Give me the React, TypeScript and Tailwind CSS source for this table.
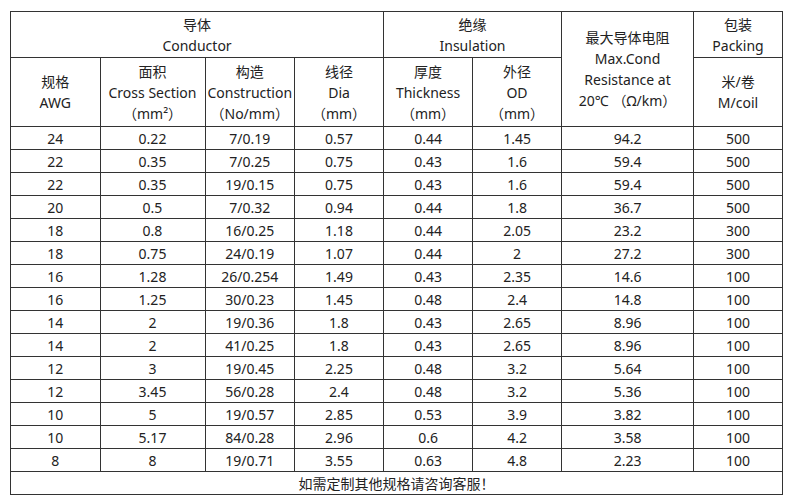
import React from 'react';

const rows: string[][] = [
  ['24', '0.22', '7/0.19', '0.57', '0.44', '1.45', '94.2', '500'],
  ['22', '0.35', '7/0.25', '0.75', '0.43', '1.6', '59.4', '500'],
  ['22', '0.35', '19/0.15', '0.75', '0.43', '1.6', '59.4', '500'],
  ['20', '0.5', '7/0.32', '0.94', '0.44', '1.8', '36.7', '500'],
  ['18', '0.8', '16/0.25', '1.18', '0.44', '2.05', '23.2', '300'],
  ['18', '0.75', '24/0.19', '1.07', '0.44', '2', '27.2', '300'],
  ['16', '1.28', '26/0.254', '1.49', '0.43', '2.35', '14.6', '100'],
  ['16', '1.25', '30/0.23', '1.45', '0.48', '2.4', '14.8', '100'],
  ['14', '2', '19/0.36', '1.8', '0.43', '2.65', '8.96', '100'],
  ['14', '2', '41/0.25', '1.8', '0.43', '2.65', '8.96', '100'],
  ['12', '3', '19/0.45', '2.25', '0.48', '3.2', '5.64', '100'],
  ['12', '3.45', '56/0.28', '2.4', '0.48', '3.2', '5.36', '100'],
  ['10', '5', '19/0.57', '2.85', '0.53', '3.9', '3.82', '100'],
  ['10', '5.17', '84/0.28', '2.96', '0.6', '4.2', '3.58', '100'],
  ['8', '8', '19/0.71', '3.55', '0.63', '4.8', '2.23', '100'],
];

const cell = "border border-[#333] text-center align-middle p-0";

export default function App() {
  return (
    <div className="w-[790px] h-[504px] bg-white pt-[11px] pl-[10px] font-['Noto_Sans','Noto_Sans_CJK_SC',sans-serif] text-[14px] leading-[21px] text-[#222]">
      <table className="table-fixed border-collapse w-[773px]">
        <colgroup>
          <col className="w-[89.5px]" />
          <col className="w-[105px]" />
          <col className="w-[89.5px]" />
          <col className="w-[89px]" />
          <col className="w-[89px]" />
          <col className="w-[89px]" />
          <col className="w-[132px]" />
          <col className="w-[89px]" />
        </colgroup>
        <thead>
          <tr className="h-[46px]">
            <th colSpan={4} className={`${cell} font-normal`}>
              导体<br />Conductor
            </th>
            <th colSpan={2} className={`${cell} font-normal`}>
              绝缘<br />Insulation
            </th>
            <th rowSpan={2} className={`${cell} font-normal`}>
              最大导体电阻<br />Max.Cond<br />Resistance at<br />20℃ （Ω/km）
            </th>
            <th className={`${cell} font-normal`}>
              包装<br />Packing
            </th>
          </tr>
          <tr className="h-[69px]">
            <th className={`${cell} font-normal`}>规格<br />AWG</th>
            <th className={`${cell} font-normal`}>面积<br />Cross Section<br />（mm²）</th>
            <th className={`${cell} font-normal`}>构造<br />Construction<br />（No/mm）</th>
            <th className={`${cell} font-normal`}>线径<br />Dia<br />（mm）</th>
            <th className={`${cell} font-normal`}>厚度<br />Thickness<br />（mm）</th>
            <th className={`${cell} font-normal`}>外径<br />OD<br />（mm）</th>
            <th className={`${cell} font-normal`}>米/卷<br />M/coil</th>
          </tr>
        </thead>
        <tbody>
          {rows.map((r, i) => (
            <tr key={i} className="h-[23px]">
              {r.map((v, j) => (
                <td key={j} className={cell}>{v}</td>
              ))}
            </tr>
          ))}
          <tr className="h-[23px]">
            <td colSpan={8} className={cell}>如需定制其他规格请咨询客服！</td>
          </tr>
        </tbody>
      </table>
    </div>
  );
}
